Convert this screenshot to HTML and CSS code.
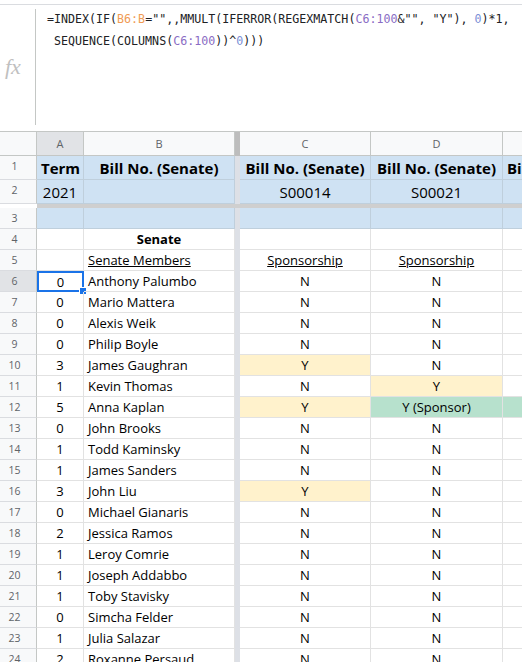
FILE: index.html
```html
<!DOCTYPE html>
<html>
<head>
  <title>Senate sponsorship</title>
  <link rel="stylesheet" href="styles.css">
</head>
<body>

<!-- Formula bar -->
<div class="formula-bar">
  <div class="fx">fx</div>
  <div class="formula">
    <div class="fline">=INDEX(IF(<span class="ref1">B6:B</span>="",,MMULT(IFERROR(REGEXMATCH(<span class="ref2">C6:100</span>&amp;"", "Y"), <span class="num">0</span>)*1,</div>
    <div class="fline">&nbsp;SEQUENCE(COLUMNS(<span class="ref2">C6:100</span>))^<span class="num">0</span>)))</div>
  </div>
</div>

<!-- Sheet -->
<div class="sheet">
  <div class="row head">
    <div class="rh corner"></div>
    <div class="cell a sel-head">A</div>
    <div class="cell b">B</div>
    <div class="fz dark"></div>
    <div class="cell c">C</div>
    <div class="cell d">D</div>
    <div class="cell e">E</div>
  </div>

  <div class="row tall blue">
    <div class="rh">1</div>
    <div class="cell a bold big center">Term</div>
    <div class="cell b bold big center">Bill No. (Senate)</div>
    <div class="fz"></div>
    <div class="cell c bold big center">Bill No. (Senate)</div>
    <div class="cell d bold big center">Bill No. (Senate)</div>
    <div class="cell e bold big">Bill No. (Senate)</div>
  </div>
  <div class="row tall blue">
    <div class="rh">2</div>
    <div class="cell a big center">2021</div>
    <div class="cell b"></div>
    <div class="fz"></div>
    <div class="cell c big center">S00014</div>
    <div class="cell d big center">S00021</div>
    <div class="cell e"></div>
  </div>
  <div class="hdivider"></div>
  <div class="row blue">
    <div class="rh">3</div>
    <div class="cell a"></div>
    <div class="cell b"></div>
    <div class="fz"></div>
    <div class="cell c"></div>
    <div class="cell d"></div>
    <div class="cell e"></div>
  </div>
  <div class="row">
    <div class="rh">4</div>
    <div class="cell a"></div>
    <div class="cell b bold center">Senate</div>
    <div class="fz"></div>
    <div class="cell c"></div>
    <div class="cell d"></div>
    <div class="cell e"></div>
  </div>
  <div class="row">
    <div class="rh">5</div>
    <div class="cell a"></div>
    <div class="cell b u">Senate Members</div>
    <div class="fz"></div>
    <div class="cell c center u">Sponsorship</div>
    <div class="cell d center u">Sponsorship</div>
    <div class="cell e"></div>
  </div>

  <div class="row">
    <div class="rh sel-head">6</div>
    <div class="cell a center selected">0<span class="handle"></span></div>
    <div class="cell b">Anthony Palumbo</div>
    <div class="fz"></div>
    <div class="cell c center">N</div>
    <div class="cell d center">N</div>
    <div class="cell e"></div>
  </div>
  <div class="row">
    <div class="rh">7</div>
    <div class="cell a center">0</div>
    <div class="cell b">Mario Mattera</div>
    <div class="fz"></div>
    <div class="cell c center">N</div>
    <div class="cell d center">N</div>
    <div class="cell e"></div>
  </div>
  <div class="row">
    <div class="rh">8</div>
    <div class="cell a center">0</div>
    <div class="cell b">Alexis Weik</div>
    <div class="fz"></div>
    <div class="cell c center">N</div>
    <div class="cell d center">N</div>
    <div class="cell e"></div>
  </div>
  <div class="row">
    <div class="rh">9</div>
    <div class="cell a center">0</div>
    <div class="cell b">Philip Boyle</div>
    <div class="fz"></div>
    <div class="cell c center">N</div>
    <div class="cell d center">N</div>
    <div class="cell e"></div>
  </div>
  <div class="row">
    <div class="rh">10</div>
    <div class="cell a center">3</div>
    <div class="cell b">James Gaughran</div>
    <div class="fz"></div>
    <div class="cell c center yes">Y</div>
    <div class="cell d center">N</div>
    <div class="cell e"></div>
  </div>
  <div class="row">
    <div class="rh">11</div>
    <div class="cell a center">1</div>
    <div class="cell b">Kevin Thomas</div>
    <div class="fz"></div>
    <div class="cell c center">N</div>
    <div class="cell d center yes">Y</div>
    <div class="cell e"></div>
  </div>
  <div class="row">
    <div class="rh">12</div>
    <div class="cell a center">5</div>
    <div class="cell b">Anna Kaplan</div>
    <div class="fz"></div>
    <div class="cell c center yes">Y</div>
    <div class="cell d center sponsor">Y (Sponsor)</div>
    <div class="cell e sponsor"></div>
  </div>
  <div class="row">
    <div class="rh">13</div>
    <div class="cell a center">0</div>
    <div class="cell b">John Brooks</div>
    <div class="fz"></div>
    <div class="cell c center">N</div>
    <div class="cell d center">N</div>
    <div class="cell e"></div>
  </div>
  <div class="row">
    <div class="rh">14</div>
    <div class="cell a center">1</div>
    <div class="cell b">Todd Kaminsky</div>
    <div class="fz"></div>
    <div class="cell c center">N</div>
    <div class="cell d center">N</div>
    <div class="cell e"></div>
  </div>
  <div class="row">
    <div class="rh">15</div>
    <div class="cell a center">1</div>
    <div class="cell b">James Sanders</div>
    <div class="fz"></div>
    <div class="cell c center">N</div>
    <div class="cell d center">N</div>
    <div class="cell e"></div>
  </div>
  <div class="row">
    <div class="rh">16</div>
    <div class="cell a center">3</div>
    <div class="cell b">John Liu</div>
    <div class="fz"></div>
    <div class="cell c center yes">Y</div>
    <div class="cell d center">N</div>
    <div class="cell e"></div>
  </div>
  <div class="row">
    <div class="rh">17</div>
    <div class="cell a center">0</div>
    <div class="cell b">Michael Gianaris</div>
    <div class="fz"></div>
    <div class="cell c center">N</div>
    <div class="cell d center">N</div>
    <div class="cell e"></div>
  </div>
  <div class="row">
    <div class="rh">18</div>
    <div class="cell a center">2</div>
    <div class="cell b">Jessica Ramos</div>
    <div class="fz"></div>
    <div class="cell c center">N</div>
    <div class="cell d center">N</div>
    <div class="cell e"></div>
  </div>
  <div class="row">
    <div class="rh">19</div>
    <div class="cell a center">1</div>
    <div class="cell b">Leroy Comrie</div>
    <div class="fz"></div>
    <div class="cell c center">N</div>
    <div class="cell d center">N</div>
    <div class="cell e"></div>
  </div>
  <div class="row">
    <div class="rh">20</div>
    <div class="cell a center">1</div>
    <div class="cell b">Joseph Addabbo</div>
    <div class="fz"></div>
    <div class="cell c center">N</div>
    <div class="cell d center">N</div>
    <div class="cell e"></div>
  </div>
  <div class="row">
    <div class="rh">21</div>
    <div class="cell a center">1</div>
    <div class="cell b">Toby Stavisky</div>
    <div class="fz"></div>
    <div class="cell c center">N</div>
    <div class="cell d center">N</div>
    <div class="cell e"></div>
  </div>
  <div class="row">
    <div class="rh">22</div>
    <div class="cell a center">0</div>
    <div class="cell b">Simcha Felder</div>
    <div class="fz"></div>
    <div class="cell c center">N</div>
    <div class="cell d center">N</div>
    <div class="cell e"></div>
  </div>
  <div class="row">
    <div class="rh">23</div>
    <div class="cell a center">1</div>
    <div class="cell b">Julia Salazar</div>
    <div class="fz"></div>
    <div class="cell c center">N</div>
    <div class="cell d center">N</div>
    <div class="cell e"></div>
  </div>
  <div class="row">
    <div class="rh">24</div>
    <div class="cell a center">2</div>
    <div class="cell b">Roxanne Persaud</div>
    <div class="fz"></div>
    <div class="cell c center">N</div>
    <div class="cell d center">N</div>
    <div class="cell e"></div>
  </div>
</div>

</body>
</html>
```

FILE: styles.css
```css
body {
  margin: 0;
  overflow: hidden;
  background: #fff;
  font-family: "Open Sans", "Noto Sans", sans-serif;
  color: #000;
}

/* Formula bar */
.formula-bar {
  display: flex;
  margin-top: 4px;
  height: 128px;
  border-top: 1px solid #dadce0;
  border-bottom: 1px solid #c4c7c5;
  box-sizing: border-box;
}
.fx {
  width: 36px;
  flex: none;
  border-right: 1px solid #c4c7c5;
  margin: 4px 0 6px;
  font-family: "Liberation Serif", serif;
  font-style: italic;
  font-size: 22px;
  color: #c0c0c0;
  padding-top: 45px;
  padding-left: 5px;
  box-sizing: border-box;
}
.formula {
  padding: 3px 0 0 11px;
  font-family: "DejaVu Sans Mono", monospace;
  font-size: 11.65px;
  line-height: 22px;
  color: #202124;
}
.fline { white-space: nowrap; }
.ref1 { color: #f09b54; }
.ref2 { color: #8a6cc4; }
.num { color: #7c8fd6; }

/* Grid */
.sheet {
  width: 660px;
}
.row {
  display: flex;
  height: 21px;
}
.row.tall { height: 24px; }
.row.head { height: 24px; }

.rh {
  width: 37px;
  flex: none;
  box-sizing: border-box;
  background: #f8f9fa;
  border-right: 1px solid #c4c7c5;
  border-bottom: 1px solid #dadce0;
  font-size: 10.5px;
  color: #5f6368;
  text-align: center;
  padding-right: 7px;
  line-height: 21px;
}
.head .rh { border-bottom-color: #c4c7c5; }
.rh.sel-head,
.cell.sel-head { background: #e1e3e6; }

.cell {
  flex: none;
  box-sizing: border-box;
  border-right: 1px solid #e2e2e2;
  border-bottom: 1px solid #e2e2e2;
  font-size: 13px;
  line-height: 21px;
  padding: 0 4px;
  white-space: nowrap;
  overflow: hidden;
  position: relative;
}
.a { width: 47px; }
.b { width: 151px; }
.c { width: 131px; }
.d { width: 132px; }
.e { width: 132px; }

.fz {
  width: 5px;
  flex: none;
  background: #dde0e6;
}
.fz.dark { background: #bdbdbd; }

.head .cell {
  background: #f8f9fa;
  border-right-color: #c4c7c5;
  border-bottom-color: #c4c7c5;
  text-align: center;
  font-size: 11px;
  color: #5f6368;
  line-height: 23px;
}
.head .cell.sel-head { background: #e1e3e6; }

.hdivider {
  height: 4px;
  background: #cfcfcf;
  margin-left: 37px;
}

.blue .cell { background: #cfe2f3; border-right-color: #bfcfdc; border-bottom-color: #bfcfdc; }
.tall .cell { line-height: 24px; }

.center { text-align: center; }
.bold { font-weight: 700; }
.big { font-size: 15px; }
.u { text-decoration: underline; }
.yes { background: #fff2cc; }
.sponsor { background: #b7e1cd; }

.selected {
  border: 2px solid #1a73e8;
  line-height: 18px;
  overflow: visible;
}
.handle {
  position: absolute;
  right: -5px;
  bottom: -5px;
  width: 6px;
  height: 6px;
  background: #1a73e8;
  border: 1px solid #fff;
}
```
